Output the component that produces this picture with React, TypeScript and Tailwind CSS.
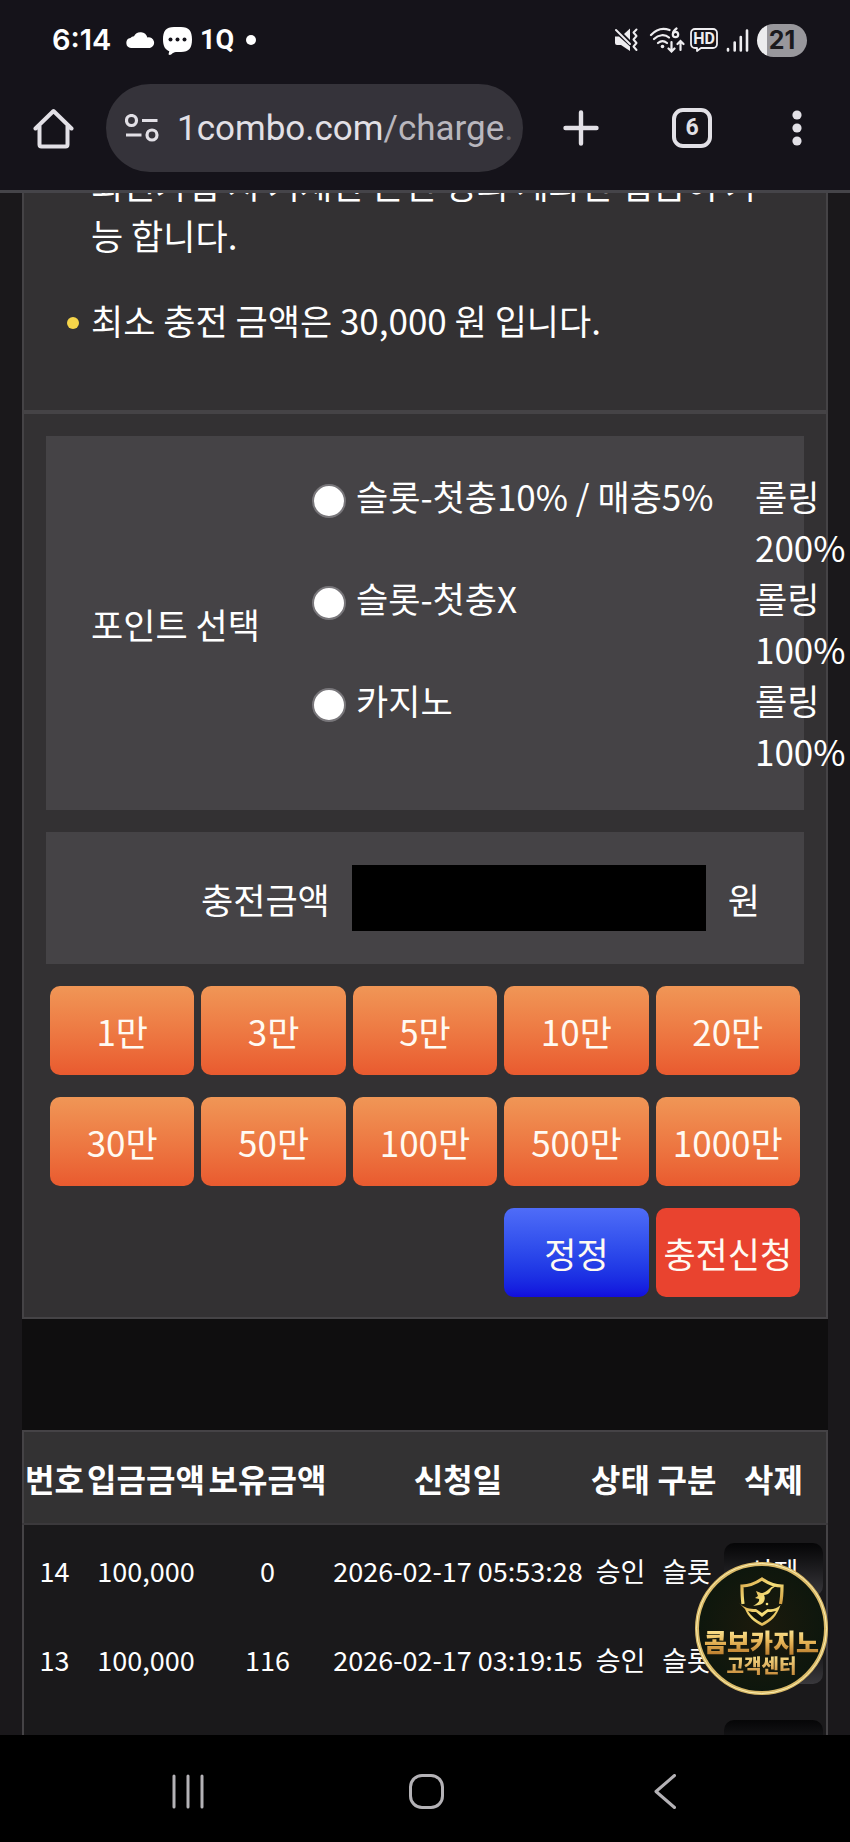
import React, { useState } from 'react';

const pointOptions = [
  { id: 'slot-bonus', label: '슬롯-첫충10% / 매충5%', rolling: '롤링 200%' },
  { id: 'slot-none', label: '슬롯-첫충X', rolling: '롤링 100%' },
  { id: 'casino', label: '카지노', rolling: '롤링 100%' },
];

const amounts = [1, 3, 5, 10, 20, 30, 50, 100, 500, 1000];

const history = [
  { no: 14, deposit: '100,000', balance: '0', date: '2026-02-17 05:53:28', status: '승인', kind: '슬롯' },
  { no: 13, deposit: '100,000', balance: '116', date: '2026-02-17 03:19:15', status: '승인', kind: '슬롯' },
];

const StatusBar: React.FC = () => (
  <div className="mb-1 flex h-20 items-center pr-[43px] pl-[52px] text-white">
    <span className="w-[74px] font-['Inter',sans-serif] text-[29px] leading-8 font-semibold">6:14</span>
    <svg className="h-4 w-[29px]" viewBox="0 0 29 16" fill="currentColor">
      <path d="M5 16a5 5 0 0 1-.6-9.9A4.500 4.500 0 0 1 8 4.200a7.200 7.200 0 0 1 13.400 1.300A5.400 5.400 0 0 1 24 16z" />
    </svg>
    <svg className="mt-px ml-2 h-7 w-[29px]" viewBox="0 0 29 28">
      <path d="M11 0h7c8 0 11 4 11 12.500S26 25 18 25h-5c-2 0-3 1-4.500 2.200-1.600 1.200-3.300.8-2.800-.7l.6-2.200C2 22.500 0 19 0 12.500 0 4 3 0 11 0z" fill="currentColor" />
      <circle cx="7.500" cy="12.500" r="2" fill="#15131a" />
      <circle cx="14.500" cy="12.500" r="2" fill="#15131a" />
      <circle cx="21.500" cy="12.500" r="2" fill="#15131a" />
    </svg>
    <span className="ml-2 w-8 font-['Roboto',sans-serif] text-[27px] leading-8 font-bold">1Q</span>
    <span className="ml-[14px] size-[10px] rounded-full bg-white" />

    <div className="ml-auto flex items-center text-[#eeedf0]">
      <svg className="h-6 w-[25px]" viewBox="0 0 25 24" fill="none" stroke="currentColor">
        <path d="M1 8.500h4L16 18.500V23L7 17H3a2 2 0 0 1-2-2z" fill="currentColor" stroke="none" />
        <path d="M10 6l6-5.500V12z" fill="currentColor" stroke="none" />
        <path d="M2 2l14 14" strokeWidth="2" strokeLinecap="round" />
        <path d="M22.500 1.500l-3 3 3 3.500-3 3.500 3 3.500-3 3.500 3 3.500" strokeWidth="2" strokeLinejoin="round" strokeLinecap="round" />
      </svg>
      <svg className="ml-[10px] h-[26px] w-9" viewBox="0 0 36 26" fill="none" stroke="currentColor" strokeLinecap="round" strokeWidth="2.200">
        <path d="M2 8C8 1.500 15 1 20.500 3M5 12c4.500-4.500 11-5 15-1.500M9 16c3-2.500 6-2.500 9 0" />
        <circle cx="13.500" cy="19.500" r="1.800" fill="currentColor" stroke="none" />
        <path d="M27.500 1.500c-3 2-3.500 4-3.500 5.500" />
        <circle cx="26.500" cy="7.500" r="2.700" />
        <path d="M22.500 15v9M19.500 21.500l3 3 3-3M31.500 23v-9M28.500 17l3-3 3 3" />
      </svg>
      <svg className="ml-[5px] h-6 w-7" viewBox="0 0 28 24">
        <path d="M5 1h18a4 4 0 0 1 4 4v11a4 4 0 0 1-4 4H11l-4 3v-3H5a4 4 0 0 1-4-4V5a4 4 0 0 1 4-4z" fill="none" stroke="currentColor" strokeWidth="1.800" strokeLinejoin="round" />
        <text x="14" y="16" textAnchor="middle" fill="currentColor" className="font-['Roboto',sans-serif] text-[16px] font-bold">HD</text>
      </svg>
      <svg className="ml-2 h-[23px] w-[23px]" viewBox="0 0 23 23" stroke="currentColor" strokeWidth="2.600" strokeLinecap="round">
        <path d="M2 20v1.500M8.700 13.500v8M14.800 8v13.500M21 1.500v20" />
      </svg>
      <span className="ml-2 flex h-[33px] w-[50px] items-center justify-center rounded-full bg-linear-to-r from-[#ececee] from-20% to-[#98979c] to-20% font-['Inter',sans-serif] text-[25px] leading-8 font-bold text-[#1b1a1e]">
        21
      </span>
    </div>
  </div>
);

const Toolbar: React.FC = () => (
  <div className="flex items-center pr-12 pl-[33px] text-[#e2e0e6]">
    <button aria-label="홈" className="shrink-0">
      <svg className="size-[41px]" viewBox="0 0 41 41" fill="none" stroke="currentColor" strokeWidth="4" strokeLinejoin="round" strokeLinecap="round">
        <path d="M2.500 20.500L20.500 3l18 17.500M6.500 18v18.500a2 2 0 0 0 2 2h24a2 2 0 0 0 2-2V18" />
      </svg>
    </button>
    <a href="#site" className="ml-8 flex h-[88px] min-w-0 flex-1 items-center overflow-hidden rounded-full bg-[#35333a] pr-2 pl-[19px]">
      <svg className="h-7 w-[34px] shrink-0" viewBox="0 0 34 28" fill="none" stroke="currentColor" strokeWidth="3.200">
        <circle cx="6.500" cy="6.500" r="5" />
        <circle cx="27" cy="21" r="5" />
        <path d="M17 6.500h15.500M1 21h15.500" />
      </svg>
      <span className="ml-[18px] pt-[2px] font-['Roboto',sans-serif] text-[35px] leading-[44px] whitespace-nowrap">
        1combo.com<span className="text-[#b9b7be]">/charge</span>
        <span className="text-[#6a686f]">.</span>
      </span>
    </a>
    <button aria-label="새 탭" className="ml-10 shrink-0">
      <svg className="size-9" viewBox="0 0 36 36" stroke="currentColor" strokeWidth="4.400" strokeLinecap="round">
        <path d="M18 2.500v31M2.500 18h31" />
      </svg>
    </button>
    <button aria-label="탭 6개" className="ml-[73px] flex size-10 shrink-0 items-center justify-center rounded-[11px] border-4 border-[#e2e0e6] font-['Roboto',sans-serif] text-[23px] leading-6 font-bold">
      6
    </button>
    <button aria-label="메뉴" className="ml-20 shrink-0">
      <svg className="h-9 w-[10px]" viewBox="0 0 10 36" fill="currentColor">
        <circle cx="5" cy="5" r="4.600" />
        <circle cx="5" cy="18" r="4.600" />
        <circle cx="5" cy="31" r="4.600" />
      </svg>
    </button>
  </div>
);

const Notice: React.FC<{ children: React.ReactNode }> = ({ children }) => (
  <li className="flex">
    <span className="mt-[23px] mr-3 size-3 shrink-0 rounded-full bg-[#f6d54a]" />
    <span>{children}</span>
  </li>
);

const ChargeForm: React.FC = () => {
  const [amount, setAmount] = useState(0);
  const [point, setPoint] = useState('');

  return (
    <form className="flex flex-col gap-[22px] px-[22px] pt-[22px] pb-5" onSubmit={(e) => e.preventDefault()}>
      <fieldset aria-label="포인트 선택" className="flex items-center bg-[#454346] py-[34px] pl-[45px]">
        <span className="w-[221px] shrink-0">포인트 선택</span>
        <div className="flex-1">
          {pointOptions.map((o) => (
            <div key={o.id} className="flex">
              <label htmlFor={o.id} className="flex flex-1 items-start gap-[10px] whitespace-nowrap">
                <input
                  id={o.id}
                  type="radio"
                  name="point"
                  checked={point === o.id}
                  onChange={() => setPoint(o.id)}
                  className="mt-[14px] size-[34px] shrink-0 appearance-none rounded-full border-2 border-[#78767a] bg-white checked:border-8 checked:border-blue-600"
                />
                {o.label}
              </label>
              {/* hangs past the right edge of the panel */}
              <span className="-mr-[47px] w-24 shrink-0 break-keep">{o.rolling}</span>
            </div>
          ))}
        </div>
      </fieldset>

      <div className="flex items-center justify-end gap-[22px] bg-[#454346] py-[33px] pr-11">
        <label htmlFor="amount">충전금액</label>
        <input
          id="amount"
          type="text"
          value={amount ? amount.toLocaleString() : ''}
          readOnly
          className="h-[66px] w-[354px] bg-black px-4 text-right outline-none"
        />
        <span>원</span>
      </div>

      <div className="grid grid-cols-5 gap-x-[7px] gap-y-[22px] px-1 whitespace-nowrap text-[#fffaf2]">
        {amounts.map((n) => (
          <button
            key={n}
            type="button"
            onClick={() => setAmount(amount + n * 10000)}
            className="h-[89px] rounded-[10px] bg-linear-to-b from-[#f09656] to-[#e95a2f]"
          >
            {n}만
          </button>
        ))}
        <button
          type="button"
          onClick={() => setAmount(0)}
          className="col-start-4 h-[89px] rounded-[10px] bg-linear-to-b from-[#4f6cf8] to-[#130cdd]"
        >
          정정
        </button>
        <button type="submit" className="h-[89px] rounded-[10px] bg-[#e9432f]">
          충전신청
        </button>
      </div>
    </form>
  );
};

const deleteButton = 'h-[53px] w-[99px] rounded-[10px] bg-linear-to-b from-[#060607] to-[#39383c] pt-1 align-middle';

const HistoryTable: React.FC = () => (
  <table className="w-full table-fixed border-2 border-[#454346] bg-[#1a191b] text-center text-[27px] leading-10 whitespace-nowrap">
    <colgroup>
      <col className="w-[62px]" />
      <col className="w-[122px]" />
      <col className="w-[121px]" />
      <col />
      <col className="w-[65px]" />
      <col className="w-[68px]" />
      <col className="w-[106px]" />
    </colgroup>
    <thead>
      <tr className="h-[93px] border-b-2 border-[#3b393c] bg-[#333233] text-[32px] leading-[48px]">
        {['번호', '입금금액', '보유금액', '신청일', '상태', '구분', '삭제'].map((h) => (
          <th key={h} className="p-0 font-bold">{h}</th>
        ))}
      </tr>
    </thead>
    <tbody>
      {history.map((r) => (
        <tr key={r.no} className="h-[89px]">
          <td className="pt-1">{r.no}</td>
          <td className="pt-1">{r.deposit}</td>
          <td className="pt-1">{r.balance}</td>
          <td className="pt-1">{r.date}</td>
          <td className="pt-1">{r.status}</td>
          <td className="pt-1">{r.kind}</td>
          <td className="p-0">
            <button className={deleteButton}>삭제</button>
          </td>
        </tr>
      ))}
      <tr className="h-[89px]">
        <td colSpan={6} />
        <td className="p-0">
          <button aria-label="삭제" className={deleteButton} />
        </td>
      </tr>
    </tbody>
  </table>
);

const SupportBadge: React.FC = () => (
  <a
    href="#support"
    className="absolute right-[22px] bottom-10 flex size-[133px] flex-col items-center rounded-full border-4 border-[#d9b968] bg-radial from-[#1c1a0c] to-[#07150d] pt-[11px] whitespace-nowrap outline-1 -outline-offset-2 outline-[#fbeeb0]"
  >
    <svg className="h-[50px] w-[46px] shrink-0" viewBox="0 0 46 50" fill="none">
      <defs>
        <linearGradient id="gold" x1="0" y1="0" x2="1" y2="1">
          <stop offset="0" stopColor="#d9a547" />
          <stop offset=".5" stopColor="#f6e07a" />
          <stop offset="1" stopColor="#cf9a3e" />
        </linearGradient>
      </defs>
      <path d="M4 27C3 20 3 14 3 9c8 0 14-3 20-7 6 4 12 7 20 7 0 6 0 11-1.500 18" stroke="url(#gold)" strokeWidth="3.200" />
      <path d="M0 26l6 6c3 8 9 13 17 17 9-4 15-10 18.500-21-4 4-9 5-13 4l-5.500 4-6-4C11 32 5 31 0 26z" fill="url(#gold)" />
      <path d="M9 34c3 5 8 9 14 12 6-3 11-7 14-12-4 1-6 1-8 1l-6 5-6-5c-3 0-5 0-8-1z" fill="#12160b" />
      <path d="M17 14l5 2c3 0 6-2 8-4 3-3 7-4 11-4-5 1-8 3-10 7-1 2-4 3-6 3 2 4 0 9-5 10l-6 1c3-2 7-4 6-7l-4-1 3-2z" fill="url(#gold)" />
      <circle cx="28" cy="27" r="1.300" fill="#f6e07a" />
    </svg>
    <span className="bg-linear-to-b from-[#fff0a0] via-[#e9b95a] to-[#b97b2c] bg-clip-text text-[25px] leading-7 font-black text-transparent">
      콤보카지노
    </span>
    <span className="bg-linear-to-b from-[#f8e08a] to-[#c88c3c] bg-clip-text text-[19px] leading-5 font-black text-transparent">
      고객센터
    </span>
  </a>
);

const NavBar: React.FC = () => (
  <nav className="grid h-[107px] shrink-0 grid-cols-3 place-items-center bg-black pt-[5px] pr-[66px] pl-[69px] text-[#b4b2b6]">
    <button aria-label="최근 앱">
      <svg className="h-[35px] w-8" viewBox="0 0 32 35" stroke="currentColor" strokeWidth="3" strokeLinecap="round">
        <path d="M2 2v31M16 2v31M30 2v31" />
      </svg>
    </button>
    <button aria-label="홈 화면" className="size-[35px] rounded-[13px] border-3 border-[#b4b2b6]" />
    <button aria-label="뒤로">
      <svg className="h-[35px] w-[22px]" viewBox="0 0 22 35" fill="none" stroke="currentColor" strokeWidth="3" strokeLinecap="round" strokeLinejoin="round">
        <path d="M20.500 1.500L2 17.500l18.500 16" />
      </svg>
    </button>
  </nav>
);

export default function App() {
  return (
    <div className="flex h-screen flex-col overflow-hidden bg-[#1a181b] font-['Noto_Sans_CJK_KR',sans-serif] text-[35px] leading-[51px] text-white">
      <header className="shrink-0 border-b-3 border-[#454449] bg-[#15131a] pb-[18px]">
        <StatusBar />
        <Toolbar />
      </header>

      <main className="relative min-h-0 flex-1 overflow-hidden">
        <div className="mx-[22px] bg-[#0f0e0f]">
          <section className="border-x-2 border-b-2 border-[#454346] bg-[#333133]">
            {/* scrolled so that the first notice is partly under the toolbar */}
            <ul className="-mt-[35px] flex flex-col gap-[34px] border-b-4 border-[#454346] pr-12 pb-[65px] pl-[43px]">
              <Notice>회원가입 시 기재한 본인 명의 계좌만 입금이 가능 합니다.</Notice>
              <Notice>최소 충전 금액은 30,000 원 입니다.</Notice>
            </ul>
            <ChargeForm />
          </section>
          <div className="pt-[111px]">
            <HistoryTable />
          </div>
        </div>
        <SupportBadge />
      </main>

      <NavBar />
    </div>
  );
}
